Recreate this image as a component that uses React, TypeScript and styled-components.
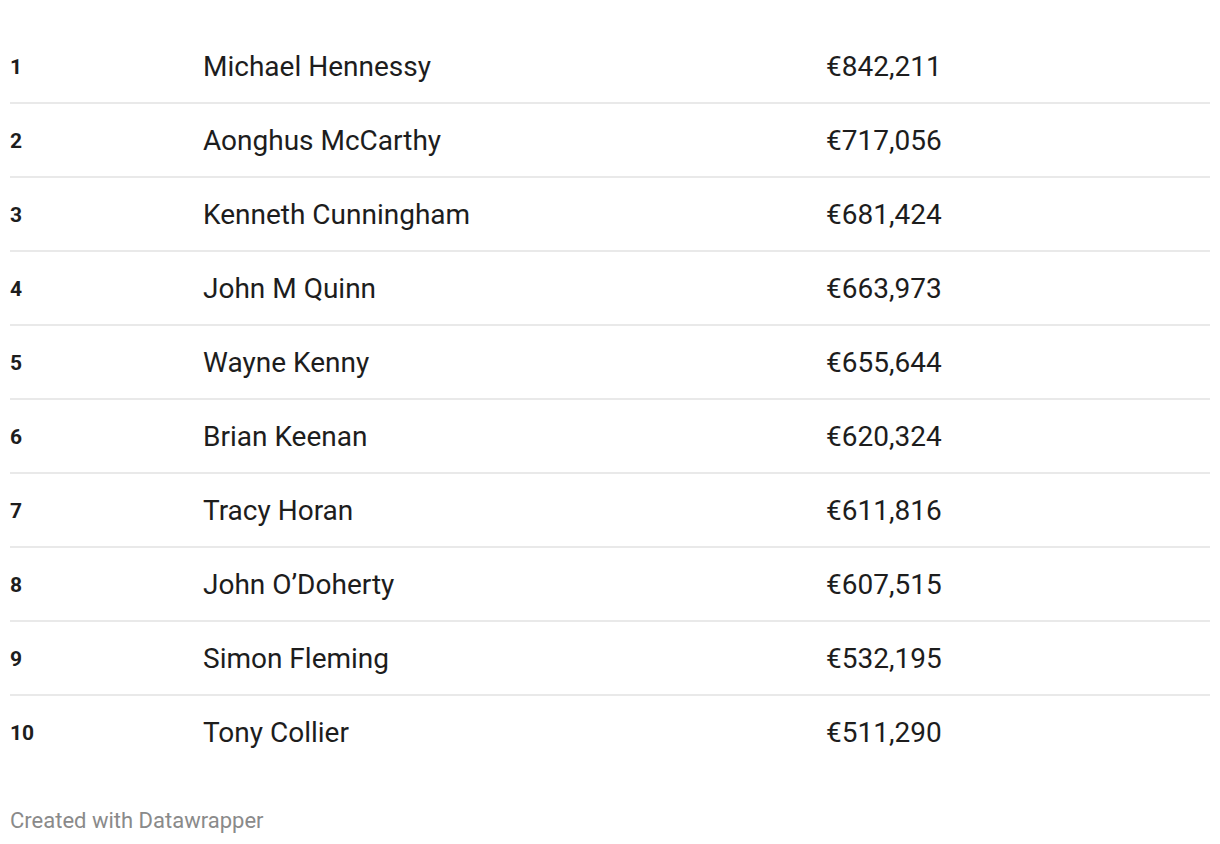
import styled, { createGlobalStyle } from "styled-components";

const GlobalStyle = createGlobalStyle`
  body {
    margin: 0;
    background: #ffffff;
    font-family: Roboto, "Liberation Sans", sans-serif;
    color: #1d1d1d;
  }
`;

const Page = styled.div`
  padding: 30px 10px 0 10px;
`;

const Table = styled.div`
  display: flex;
  flex-direction: column;
`;

const Row = styled.div<{ $last?: boolean }>`
  display: grid;
  grid-template-columns: 193px 623px 1fr;
  align-items: center;
  height: 72px;
  border-bottom: ${(p) => (p.$last ? "2px solid transparent" : "2px solid #e9e9e9")};
`;

const Rank = styled.div`
  font-size: 21px;
  font-weight: 700;
  padding-top: 2px;
`;

const Name = styled.div`
  font-size: 28px;
`;

const Amount = styled.div`
  font-size: 28px;
`;

const Footer = styled.div`
  margin-top: 38px;
  font-size: 22px;
  color: #8a8a8a;
`;

type Entry = { rank: number; name: string; amount: string };

const rows: Entry[] = [
  { rank: 1, name: "Michael Hennessy", amount: "€842,211" },
  { rank: 2, name: "Aonghus McCarthy", amount: "€717,056" },
  { rank: 3, name: "Kenneth Cunningham", amount: "€681,424" },
  { rank: 4, name: "John M Quinn", amount: "€663,973" },
  { rank: 5, name: "Wayne Kenny", amount: "€655,644" },
  { rank: 6, name: "Brian Keenan", amount: "€620,324" },
  { rank: 7, name: "Tracy Horan", amount: "€611,816" },
  { rank: 8, name: "John O’Doherty", amount: "€607,515" },
  { rank: 9, name: "Simon Fleming", amount: "€532,195" },
  { rank: 10, name: "Tony Collier", amount: "€511,290" },
];

const App: React.FC = () => {
  return (
    <Page>
      <GlobalStyle />
      <Table>
        {rows.map((r, i) => (
          <Row key={r.rank} $last={i === rows.length - 1}>
            <Rank>{r.rank}</Rank>
            <Name>{r.name}</Name>
            <Amount>{r.amount}</Amount>
          </Row>
        ))}
      </Table>
      <Footer>Created with Datawrapper</Footer>
    </Page>
  );
};

export default App;
